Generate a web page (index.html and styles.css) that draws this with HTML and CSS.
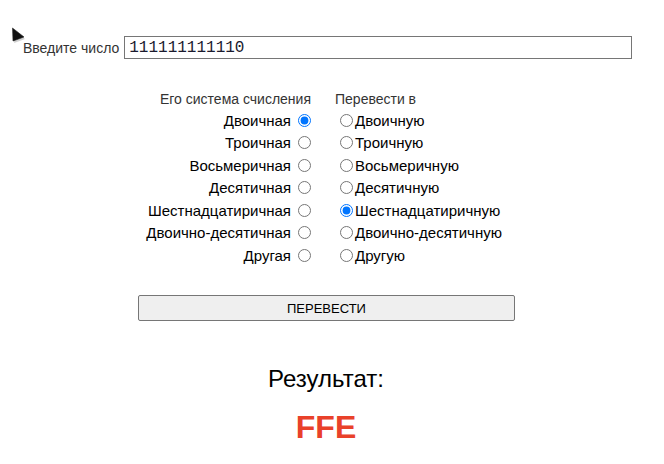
FILE: index.html
```html
<!DOCTYPE html>
<html lang="ru">
<head>
<meta charset="utf-8">
<title>Перевод чисел</title>
<link rel="stylesheet" href="styles.css">
</head>
<body>
<div class="cursor"><svg width="16" height="20" viewBox="0 0 16 20"><polygon points="2.5,3.5 3.2,17 14,13" fill="#000" opacity="0.18"/><polygon points="1.5,2 2,15 13,11" fill="#111" stroke="#222" stroke-width="0.6" stroke-linejoin="round"/></svg></div>
<div class="entry">
  <label class="entry-label" for="num">Введите число</label>
  <input class="entry-input" id="num" type="text" value="111111111110">
</div>
<div class="grid">
  <div class="head head-left">Его система счисления</div>
  <div class="head head-right">Перевести в</div>

  <label class="cell cell-left">Двоичная<input type="radio" name="from" checked></label>
  <label class="cell cell-right"><input type="radio" name="to">Двоичную</label>

  <label class="cell cell-left">Троичная<input type="radio" name="from"></label>
  <label class="cell cell-right"><input type="radio" name="to">Троичную</label>

  <label class="cell cell-left">Восьмеричная<input type="radio" name="from"></label>
  <label class="cell cell-right"><input type="radio" name="to">Восьмеричную</label>

  <label class="cell cell-left">Десятичная<input type="radio" name="from"></label>
  <label class="cell cell-right"><input type="radio" name="to">Десятичную</label>

  <label class="cell cell-left">Шестнадцатиричная<input type="radio" name="from"></label>
  <label class="cell cell-right"><input type="radio" name="to" checked>Шестнадцатиричную</label>

  <label class="cell cell-left">Двоично-десятичная<input type="radio" name="from"></label>
  <label class="cell cell-right"><input type="radio" name="to">Двоично-десятичную</label>

  <label class="cell cell-left">Другая<input type="radio" name="from"></label>
  <label class="cell cell-right"><input type="radio" name="to">Другую</label>
</div>
<div class="actions"><button class="convert" type="button">ПЕРЕВЕСТИ</button></div>
<div class="result">
  <div class="result-label">Результат:</div>
  <div class="result-value">FFE</div>
</div>
</body>
</html>
```
FILE: styles.css
```css
html, body {
  margin: 0;
  padding: 0;
  background: #fff;
}
body {
  font-family: "Liberation Sans", Arial, sans-serif;
  color: #000;
  width: 664px;
  height: 464px;
  overflow: hidden;
  position: relative;
}
.cursor {
  position: absolute;
  left: 11px;
  top: 26px;
  width: 16px;
  height: 20px;
}
.cursor svg { display: block; }
.entry {
  display: flex;
  align-items: center;
  padding: 36px 0 0 23px;
  gap: 5px;
}
.entry-label {
  font-size: 14px;
  color: #333;
}
.entry-input {
  box-sizing: border-box;
  width: 508px;
  height: 23px;
  margin: 0;
  padding: 0 4px;
  border: 1px solid #767676;
  border-radius: 0;
  font-family: "Liberation Mono", "DejaVu Sans Mono", monospace;
  font-size: 16px;
  color: #1a1a2e;
}
.grid {
  display: grid;
  grid-template-columns: 311px 1fr;
  grid-template-rows: 20px repeat(7, 22.5px);
  column-gap: 24px;
  margin-top: 30px;
}
.head {
  font-size: 14px;
  color: #333;
  line-height: 20px;
}
.head-left { text-align: right; }
.cell {
  display: flex;
  align-items: center;
  font-size: 15px;
  white-space: nowrap;
}
.cell input {
  width: 13px;
  height: 13px;
  margin: 0;
}
.cell-left { justify-content: flex-end; }
.cell-left input { margin-left: 7px; }
.cell-right input { margin-left: 5px; margin-right: 2px; }
.actions {
  padding: 28.5px 0 0 138px;
}
.convert {
  display: block;
  box-sizing: border-box;
  width: 377px;
  height: 26px;
  margin: 0;
  padding: 0;
  background: #efefef;
  border: 1px solid #767676;
  border-radius: 2px;
  font-family: "Liberation Sans", Arial, sans-serif;
  font-size: 13px;
  color: #000;
}
.result {
  width: 652px;
  text-align: center;
  padding-top: 43px;
}
.result-label {
  font-size: 24px;
  line-height: 29px;
}
.result-value {
  margin-top: 16px;
  font-size: 32px;
  font-weight: bold;
  line-height: 37px;
  color: #e9412a;
}
```
